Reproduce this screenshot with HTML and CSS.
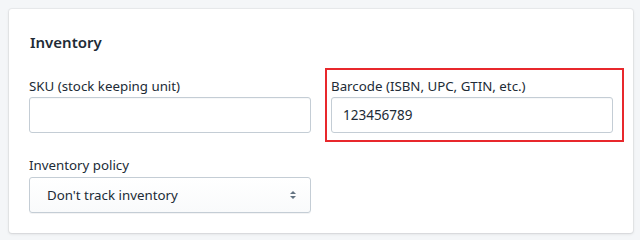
FILE: index.html
```html
<!DOCTYPE html>
<html lang="en">
<head>
<meta charset="utf-8">
<title>Inventory</title>
<link rel="stylesheet" href="styles.css">
</head>
<body>
<section class="card">
  <h2 class="card-title">Inventory</h2>
  <div class="form-grid">
    <div class="field">
      <label class="field-label" for="sku">SKU (stock keeping unit)</label>
      <input class="text-input" id="sku" type="text" value="">
    </div>
    <div class="field field-highlight">
      <label class="field-label" for="barcode">Barcode (ISBN, UPC, GTIN, etc.)</label>
      <input class="text-input" id="barcode" type="text" value="123456789">
    </div>
    <div class="field">
      <label class="field-label" for="policy">Inventory policy</label>
      <div class="select-wrap">
        <select class="select" id="policy">
          <option>Don't track inventory</option>
        </select>
        <svg class="select-arrows" width="8" height="10" viewBox="0 0 8 10" aria-hidden="true">
          <path d="M4 1 L7 4 H1 Z" fill="#637381"/>
          <path d="M4 9 L7 6 H1 Z" fill="#637381"/>
        </svg>
      </div>
    </div>
  </div>
</section>
</body>
</html>
```
FILE: styles.css
```css
html, body {
  margin: 0;
  padding: 0;
}
body {
  background: #f4f6f8;
  font-family: "Noto Sans", "Open Sans", sans-serif;
  color: #212b36;
  width: 640px;
  height: 239px;
  overflow: hidden;
}
.card {
  margin: 9px 7px 0 9px;
  width: 624px;
  box-sizing: border-box;
  background: #fff;
  border-radius: 3px;
  box-shadow: 0 0 0 1px rgba(63, 63, 68, 0.05), 0 1px 3px 0 rgba(63, 63, 68, 0.15);
  padding: 21px 20px 20px 21px;
}
.card-title {
  margin: 0;
  font-size: 15px;
  line-height: 24px;
  font-weight: 600;
}
.form-grid {
  margin-top: 22px;
  margin-left: -1px;
  display: grid;
  grid-template-columns: 282px 282px;
  column-gap: 20px;
  row-gap: 22px;
}
.field {
  display: flex;
  flex-direction: column;
  position: relative;
}
.field-highlight::after {
  content: "";
  position: absolute;
  left: -6px;
  right: -11px;
  top: -8px;
  bottom: -9px;
  border: 2px solid #e8282c;
  pointer-events: none;
}
.field-label {
  font-size: 13.3px;
  line-height: 20px;
  margin-bottom: 1px;
}
.text-input {
  box-sizing: border-box;
  height: 36px;
  width: 100%;
  margin: 0;
  border: 1px solid #c4cdd5;
  border-radius: 3px;
  box-shadow: inset 0 1px 0 0 rgba(99, 115, 129, 0.05);
  padding: 0 11px;
  font-family: inherit;
  font-size: 13.5px;
  color: #212b36;
  background: #fff;
  outline: none;
}
.select-wrap {
  position: relative;
  margin-top: 1px;
}
.select {
  appearance: none;
  -webkit-appearance: none;
  box-sizing: border-box;
  width: 100%;
  height: 36px;
  margin: 0;
  border: 1px solid #c4cdd5;
  border-radius: 3px;
  background: linear-gradient(180deg, #fff, #f9fafb);
  box-shadow: 0 1px 0 0 rgba(22, 29, 37, 0.05);
  padding: 0 30px 0 17px;
  font-family: inherit;
  font-size: 13.3px;
  color: #212b36;
  outline: none;
}
.select-arrows {
  position: absolute;
  right: 14px;
  top: 13px;
  pointer-events: none;
}
```
